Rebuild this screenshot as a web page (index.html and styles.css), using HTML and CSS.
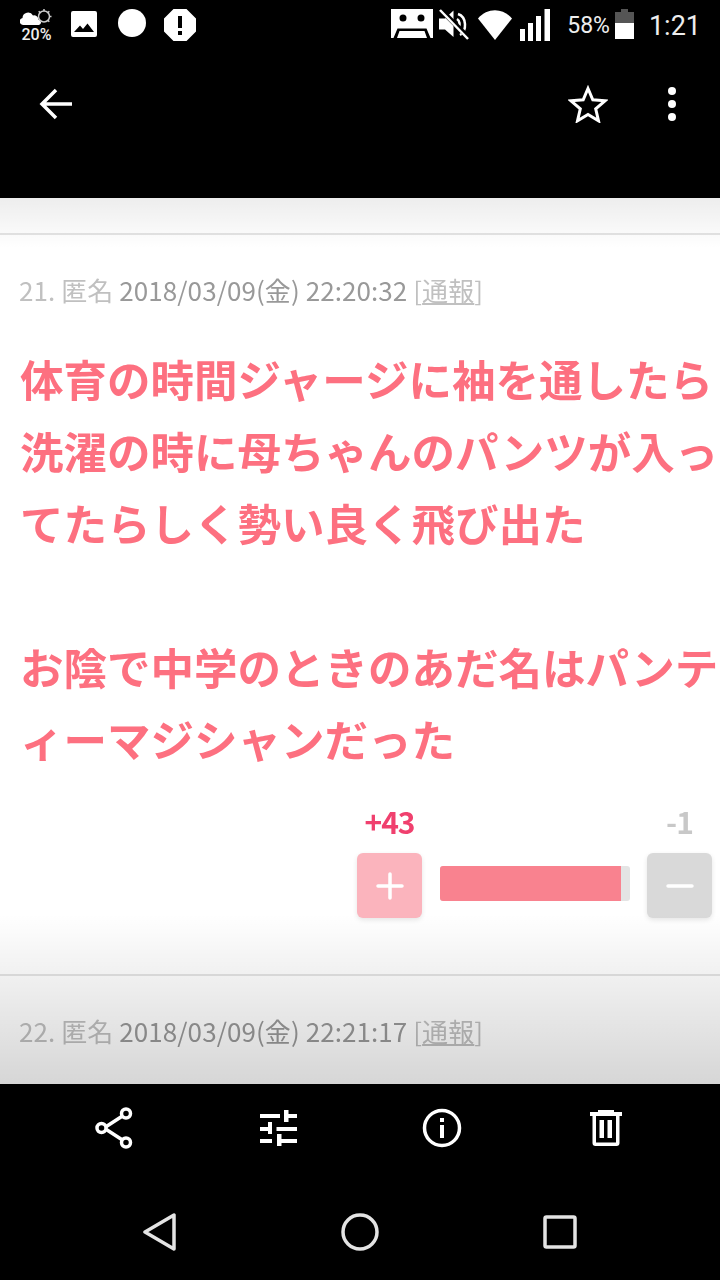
FILE: index.html
```html
<!DOCTYPE html>
<html lang="ja">
  <head>
    <meta charset="UTF-8" />
    <title>21. 匿名</title>
    <link rel="stylesheet" href="styles.css">
  </head>
  <body>
    <div class="phone">
      <header class="top-bars">
        <div class="status-bar">
          <div class="status-left">
            <div class="weather">
              <svg width="32" height="18" viewBox="0 0 32 18">
                <path fill="#fff" d="M3 16a3.600 3.600 0 0 1-.5-7.100A5.600 5.600 0 0 1 13 6.400a4.500 4.500 0 0 1 5.500 4.300 2.700 2.700 0 0 1 .5 5.300z" />
                <circle cx="24" cy="7.500" r="5.500" fill="none" stroke="#ccc" stroke-width="1.500" />
                <path stroke="#ccc" stroke-width="1.500" d="M24 0v2M31.500 7.500h-2M29.300 2.200l-1.400 1.400M29.300 12.800l-1.400-1.400M18.700 2.200l1.400 1.400" />
              </svg>
              <span>20%</span>
            </div>
            <svg class="st-image" width="26" height="26" viewBox="0 0 26 26">
              <path fill="#fff" fill-rule="evenodd" d="M2 0h22a2 2 0 0 1 2 2v22a2 2 0 0 1-2 2H2a2 2 0 0 1-2-2V2a2 2 0 0 1 2-2zM3 21h20l-6.500-8.500-4.500 5.500-3-3.500z" />
            </svg>
            <svg class="st-circle" width="28" height="30" viewBox="0 0 28 30">
              <circle cx="14" cy="14" r="14" fill="#fff" />
            </svg>
            <svg class="st-alert" width="32" height="32" viewBox="0 0 32 32">
              <path fill="#fff" fill-rule="evenodd" d="M9.500 0h13L32 9.500v13L22.500 32h-13L0 22.500v-13zM14 7v12h4V7zM14 22v4h4v-4z" />
            </svg>
          </div>
          <div class="status-right">
            <svg width="42" height="29" viewBox="0 0 42 29">
              <path fill="#fff" fill-rule="evenodd" d="M0 0h42v29h-2.500l-4-9.500h-29L2.500 29H0zM12 5.500a3.500 3.500 0 1 0 0 7 3.500 3.500 0 0 0 0-7zM30 5.500a3.500 3.500 0 1 0 0 7 3.500 3.500 0 0 0 0-7zM8.500 22h25l2.500 7H6z" />
            </svg>
            <svg class="st-mute" width="31" height="31" viewBox="0 0 31 31">
              <path fill="#fff" d="M0 9.500h6L14.500 1.500V28L6 20.500H0z" />
              <path fill="none" stroke="#fff" stroke-width="2.500" d="M19 5c9 3 9 17 2 21M18 10c3 2 3 6 2 8" />
              <path stroke="#000" stroke-width="5" d="M1 0l29 29" />
              <path stroke="#fff" stroke-width="2.500" d="M1 1l28 29" />
            </svg>
            <svg class="st-wifi" width="34" height="30" viewBox="0 0 34 30">
              <path fill="#fff" d="M0 8.500C9-2.500 25-2.500 34 8.500L17 30z" />
            </svg>
            <svg class="st-signal" width="30" height="32" viewBox="0 0 30 32">
              <path fill="#fff" d="M0 20h5v12H0zM8 14h5v18H8zM16 7h5v25h-5zM24.500 0H30v32h-5.500z" />
            </svg>
            <span class="st-percent">58%</span>
            <svg class="st-battery" width="19" height="30" viewBox="0 0 19 30">
              <path fill="#555" d="M6 0h7v3h6v12H0V3h6z" />
              <path fill="#fff" d="M0 14h19v16H0z" />
            </svg>
            <span class="st-time">1:21</span>
          </div>
        </div>
        <div class="tool-bar">
          <svg width="34" height="32" viewBox="0 0 34 32">
            <path fill="none" stroke="#fff" stroke-width="3.500" d="M33 16H4M17 2L3 16l14 14" />
          </svg>
          <div class="tool-right">
            <svg width="40" height="38" viewBox="0 0 40 38">
              <path fill="none" stroke="#fff" stroke-width="3" d="M20 3.500l4.800 11.300 12.200 1-9.300 8 2.800 12L20 29.500 9.500 35.800l2.800-12-9.300-8 12.200-1z" />
            </svg>
            <div class="dots"><i></i><i></i><i></i></div>
          </div>
        </div>
      </header>

      <main class="content">
        <div class="strip"></div>
        <article class="post">
          <p class="meta">
            <span class="num">21. 匿名</span> 2018/03/09(金) 22:20:32 <span class="num">[<u>通報</u>]</span>
          </p>
          <p class="body-text">
            体育の時間ジャージに袖を通したら<br>
            洗濯の時に母ちゃんのパンツが入っ<br>
            てたらしく勢い良く飛び出た<br>
            <br>
            お陰で中学のときのあだ名はパンテ<br>
            ィーマジシャンだった
          </p>
          <div class="votes">
            <span class="count-up">+43</span>
            <span></span>
            <span class="count-down">-1</span>
            <div class="vote-btn up">
              <svg width="28" height="28" viewBox="0 0 28 28"><path stroke="#fff" stroke-width="3.500" stroke-linecap="round" d="M14 2v24M2 14h24" /></svg>
            </div>
            <div class="bar"><div class="bar-fill" style="width: 95.300%"></div></div>
            <div class="vote-btn down">
              <svg width="28" height="28" viewBox="0 0 28 28"><path stroke="#fff" stroke-width="3.500" stroke-linecap="round" d="M2 14h24" /></svg>
            </div>
          </div>
        </article>
        <article class="post next">
          <p class="meta">
            <span class="num">22. 匿名</span> 2018/03/09(金) 22:21:17 <span class="num">[<u>通報</u>]</span>
          </p>
        </article>
      </main>

      <footer class="bottom-bars">
        <div class="actions">
          <svg width="38" height="42" viewBox="0 0 38 42">
            <g fill="none" stroke="#fff" stroke-width="3.500">
              <path d="M9 21L29 8M9 21l20 13" />
              <circle cx="6.500" cy="21" r="4.500" fill="#000" />
              <circle cx="31" cy="6.500" r="4.500" fill="#000" />
              <circle cx="31" cy="35.500" r="4.500" fill="#000" />
            </g>
          </svg>
          <svg class="sliders" width="37" height="36" viewBox="0 0 37 36">
            <path fill="#fff" d="M0 4h20v4H0zM24 0h4.500v4H37v4h-8.500v4H24zM8 12h4v5h25v4H16.500v-4H12v7H8v-3H0v-4h8zM0 29h12v4H0zM17 24h4.500v5H37v4H21.500v3H17z" />
          </svg>
          <svg width="40" height="40" viewBox="0 0 40 40">
            <circle cx="20" cy="20" r="17.500" fill="none" stroke="#fff" stroke-width="3.500" />
            <path fill="#fff" d="M18 10h4v4h-4zM18 17h4v13h-4z" />
          </svg>
          <svg width="32" height="36" viewBox="0 0 32 36">
            <path fill="#fff" fill-rule="evenodd" d="M8 0h16v2h8v4H0V2h8zM2.500 6h27v27a3 3 0 0 1-3 3h-21a3 3 0 0 1-3-3zM6 6v26.500h20V6zM9.500 10H14v18H9.500zM17.500 10H22v18h-4.500z" />
          </svg>
        </div>
        <nav class="nav-bar">
          <svg width="34" height="38" viewBox="0 0 34 38">
            <path fill="none" stroke="#e4e4e4" stroke-width="3.500" stroke-linejoin="round" d="M31 2v34L2 19z" />
          </svg>
          <svg width="38" height="38" viewBox="0 0 38 38">
            <circle cx="19" cy="19" r="17" fill="none" stroke="#e4e4e4" stroke-width="3.500" />
          </svg>
          <svg width="34" height="34" viewBox="0 0 34 34">
            <rect x="2" y="2" width="30" height="30" rx="1.500" fill="none" stroke="#e4e4e4" stroke-width="3.500" />
          </svg>
        </nav>
      </footer>
    </div>
  </body>
</html>
```

FILE: styles.css
```css
* {
  margin: 0;
  padding: 0;
  box-sizing: border-box;
}
body {
  background: #000;
  font-family: "Noto Sans CJK JP", "Noto Sans", sans-serif;
}
.phone {
  width: 720px;
  height: 1280px;
  display: flex;
  flex-direction: column;
  overflow: hidden;
}
svg {
  display: block;
  flex: none;
}

/* status bar + toolbar */
.top-bars {
  height: 198px;
  background: #000;
  color: #fff;
}
.status-bar {
  height: 48px;
  display: flex;
  justify-content: space-between;
  padding: 9px 19px 0 20px;
}
.status-left,
.status-right {
  display: flex;
  align-items: flex-start;
}
.weather {
  width: 33px;
  font-family: "Roboto", sans-serif;
  font-size: 16px;
  font-weight: 500;
  line-height: 15px;
  color: #eee;
  text-align: center;
}
.st-image {
  margin: 2px 0 0 18px;
}
.st-circle {
  margin-left: 21px;
}
.st-alert {
  margin-left: 18px;
}
.status-right {
  font-family: "Roboto", sans-serif;
  color: #eee;
}
.st-mute {
  margin-left: 6px;
}
.st-wifi {
  margin: 1px 0 0 8px;
}
.st-signal {
  margin-left: 8px;
}
.st-percent {
  margin-left: 17px;
  font-size: 23px;
  line-height: 34px;
}
.st-battery {
  margin-left: 5px;
}
.st-time {
  margin-left: 15px;
  font-size: 27px;
  line-height: 34px;
}
.tool-bar {
  display: flex;
  justify-content: space-between;
  align-items: center;
  padding: 37px 44px 0 39px;
}
.tool-right {
  display: flex;
  align-items: center;
  gap: 60px;
}
.dots {
  display: flex;
  flex-direction: column;
  gap: 5px;
}
.dots i {
  width: 8px;
  height: 8px;
  border-radius: 50%;
  background: #fff;
}

/* thread */
.content {
  position: relative;
  height: 886px;
  background: #fff;
  overflow: hidden;
  filter: blur(0.6px);
}
.content::before {
  content: "";
  position: absolute;
  top: 0;
  left: 0;
  right: 0;
  height: 50px;
  background: linear-gradient(rgba(0, 0, 0, 0.07), rgba(0, 0, 0, 0));
}
.content::after {
  content: "";
  position: absolute;
  bottom: 0;
  left: 0;
  right: 0;
  height: 170px;
  background: linear-gradient(rgba(0, 0, 0, 0), rgba(0, 0, 0, 0.16));
}
.strip {
  height: 37px;
  border-bottom: 2px solid #e4e4e4;
}
.post {
  height: 741px;
  padding: 35px 8px 0 19px;
  border-bottom: 2px solid #e4e4e4;
}
.post.next {
  height: auto;
  border-bottom: none;
}
.meta {
  font-size: 26px;
  line-height: 40px;
  color: #999;
  letter-spacing: 0.08px;
  white-space: nowrap;
}
.meta .num {
  color: #c0c0c0;
}
.body-text {
  margin-top: 33px;
  padding-left: 1px;
  font-size: 43.500px;
  font-weight: 700;
  line-height: 72px;
  color: #fd7080;
  white-space: nowrap;
}
.votes {
  display: grid;
  grid-template-columns: 65px 190px 65px;
  column-gap: 17.500px;
  justify-content: end;
  margin-top: 26px;
}
.count-up,
.count-down {
  font-size: 30px;
  font-weight: 700;
  line-height: 40px;
  text-align: center;
  letter-spacing: -1px;
}
.count-up {
  color: #f0406e;
}
.count-down {
  color: #c8c8c8;
}
.vote-btn {
  height: 65px;
  margin-top: 12px;
  border-radius: 6px;
  display: flex;
  align-items: center;
  justify-content: center;
  box-shadow: 0 2px 5px rgba(0, 0, 0, 0.1);
}
.vote-btn.up {
  background: #fbb4bd;
}
.vote-btn.down {
  background: #d9d9d9;
}
.bar {
  height: 35px;
  margin-top: 25px;
  background: #e4e4e4;
  border-radius: 3px;
  overflow: hidden;
}
.bar-fill {
  height: 100%;
  background: #f9828f;
}

/* bottom */
.bottom-bars {
  flex: 1;
  background: #000;
}
.actions {
  height: 88px;
  display: grid;
  grid-template-columns: repeat(4, 164px);
  justify-content: center;
  justify-items: center;
  align-items: center;
}
.nav-bar {
  display: grid;
  grid-template-columns: repeat(3, 200px);
  justify-content: center;
  justify-items: center;
  align-items: center;
  height: 76px;
  margin-top: 22px;
}
```
